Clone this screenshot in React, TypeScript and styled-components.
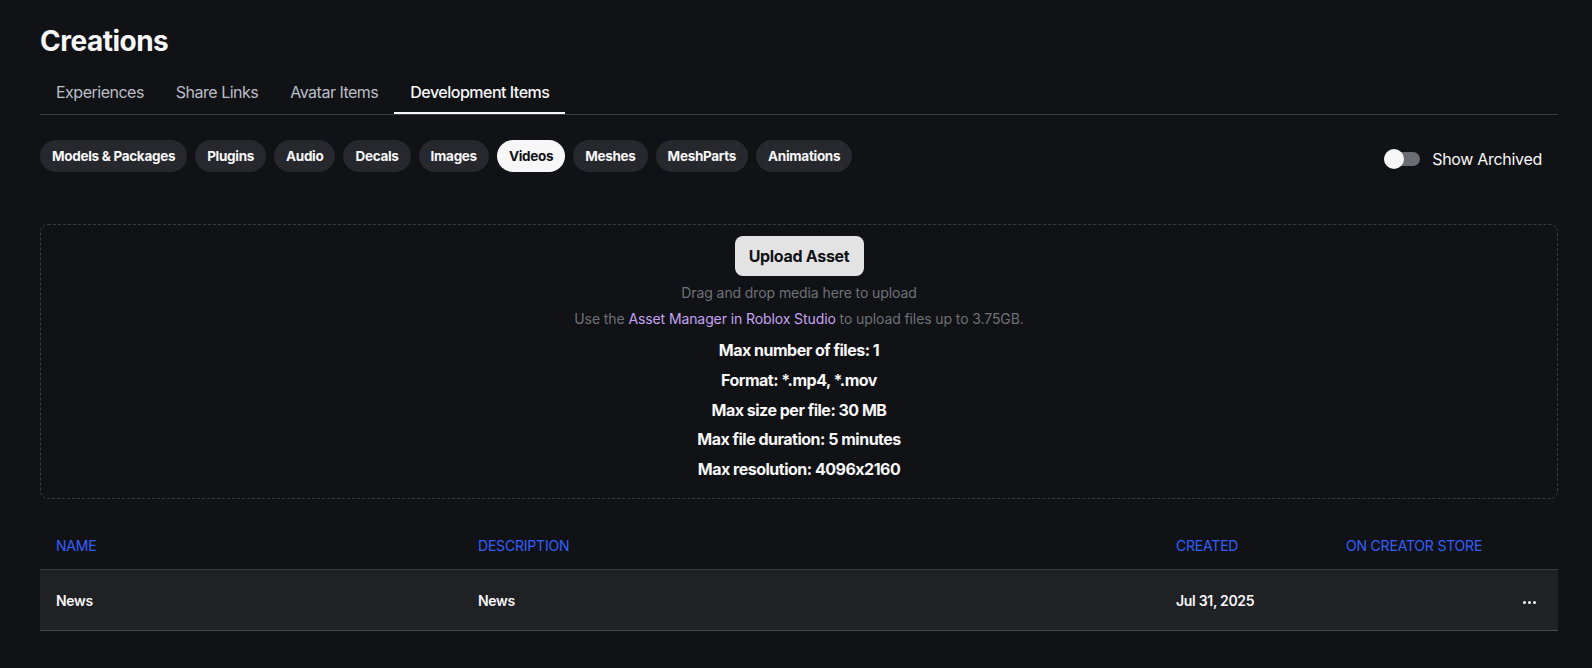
import { ReactElement } from 'react'
import styled, { createGlobalStyle } from 'styled-components'

const GlobalStyle = createGlobalStyle`
  html, body {
    margin: 0;
    background: #111216;
    font-family: Inter, 'Noto Sans', sans-serif;
    color: #f7f7f8;
    overflow: hidden;
  }
`

const Page = styled.main`
  padding: 24px 34px 0 40px;
  box-sizing: border-box;
  height: 668px;
`

const Title = styled.h1`
  font-size: 28px;
  font-weight: 700;
  margin: 0 0 14px;
  line-height: 34px;
  letter-spacing: -0.5px;
`

const TabBar = styled.nav`
  display: flex;
  border-bottom: 1px solid #3a3b40;
`

const Tab = styled.div<{ $active?: boolean }>`
  padding: 10px 16px 12px;
  font-size: 16px;
  line-height: 20px;
  color: ${(p) => (p.$active ? '#f7f7f8' : '#bcbec8')};
  font-weight: ${(p) => (p.$active ? 500 : 400)};
  box-shadow: ${(p) => (p.$active ? 'inset 0 -2px 0 #f7f7f8' : 'none')};
  letter-spacing: -0.5px;
`

const FilterRow = styled.div`
  display: flex;
  align-items: center;
  justify-content: space-between;
  margin-top: 25px;
`

const Chips = styled.div`
  display: flex;
  gap: 8px;
`

const Chip = styled.div<{ $active?: boolean }>`
  height: 32px;
  padding: 0 12px;
  display: flex;
  align-items: center;
  border-radius: 16px;
  font-size: 13.5px;
  font-weight: 700;
  letter-spacing: -0.3px;
  background: ${(p) => (p.$active ? '#f7f7f8' : '#27282d')};
  color: ${(p) => (p.$active ? '#111216' : '#f7f7f8')};
`

const ArchiveToggle = styled.label`
  display: flex;
  align-items: center;
  gap: 12px;
  font-size: 16px;
  letter-spacing: -0.3px;
  color: #f7f7f8;
  margin-top: 6px;
  margin-right: 16px;
`

const Track = styled.span`
  position: relative;
  width: 36px;
  height: 14px;
  border-radius: 7px;
  background: #6c6d72;
`

const Knob = styled.span`
  position: absolute;
  left: 0;
  top: -3px;
  width: 20px;
  height: 20px;
  border-radius: 50%;
  background: #f7f7f8;
`

const DropZone = styled.section`
  margin-top: 52px;
  border: 1px dashed #3a3b40;
  border-radius: 8px;
  height: 275px;
  box-sizing: border-box;
  display: flex;
  flex-direction: column;
  align-items: center;
  padding-top: 11px;
`

const UploadButton = styled.button`
  height: 40px;
  width: 129px;
  border: none;
  border-radius: 8px;
  background: #e3e3e4;
  color: #111216;
  font-family: inherit;
  font-size: 16px;
  font-weight: 700;
  letter-spacing: -0.3px;
`

const Hint = styled.p`
  margin: 0;
  font-size: 14px;
  line-height: 26px;
  color: #6f7178;
  letter-spacing: -0.1px;
  &:first-of-type {
    margin-top: 4px;
  }
`

const HintLink = styled.span`
  color: #c8a3f2;
`

const Specs = styled.ul`
  list-style: none;
  margin: 4px 0 0;
  padding: 0;
  text-align: center;
`

const Spec = styled.li`
  font-size: 16px;
  font-weight: 700;
  line-height: 29.8px;
  letter-spacing: -0.5px;
`

const Table = styled.div`
  margin-top: 22px;
`

const gridCols = '422px 698px 170px 1fr'

const HeadRow = styled.div`
  display: grid;
  grid-template-columns: ${gridCols};
  height: 48px;
  align-items: center;
  padding-left: 16px;
  font-size: 14px;
  color: #335fff;
  text-transform: uppercase;
  letter-spacing: -0.2px;
`

const BodyRow = styled.div`
  display: grid;
  grid-template-columns: ${gridCols};
  align-items: center;
  height: 60px;
  padding-left: 16px;
  background: #202125;
  border-top: 1px solid #3a3b40;
  border-bottom: 1px solid #4a4b50;
  font-size: 14px;
  font-weight: 600;
  letter-spacing: -0.3px;
`

const Cell = styled.div`
  position: relative;
`

const MoreButton = styled.span`
  position: absolute;
  right: 22px;
  top: 50%;
  display: flex;
  gap: 2px;
  margin-top: 1px;
`

const Dot = styled.span`
  width: 3px;
  height: 3px;
  border-radius: 50%;
  background: #f7f7f8;
`

const tabs = ['Experiences', 'Share Links', 'Avatar Items', 'Development Items']
const chips = ['Models & Packages', 'Plugins', 'Audio', 'Decals', 'Images', 'Videos', 'Meshes', 'MeshParts', 'Animations']
const specs = [
  'Max number of files: 1',
  'Format: *.mp4, *.mov',
  'Max size per file: 30 MB',
  'Max file duration: 5 minutes',
  'Max resolution: 4096x2160',
]

export default function App(): ReactElement {
  return (
    <>
      <GlobalStyle />
      <Page>
        <Title>Creations</Title>
        <TabBar>
          {tabs.map((t) => (
            <Tab key={t} $active={t === 'Development Items'}>
              {t}
            </Tab>
          ))}
        </TabBar>
        <FilterRow>
          <Chips>
            {chips.map((c) => (
              <Chip key={c} $active={c === 'Videos'}>
                {c}
              </Chip>
            ))}
          </Chips>
          <ArchiveToggle>
            <Track>
              <Knob />
            </Track>
            Show Archived
          </ArchiveToggle>
        </FilterRow>
        <DropZone>
          <UploadButton>Upload Asset</UploadButton>
          <Hint>Drag and drop media here to upload</Hint>
          <Hint>
            Use the <HintLink>Asset Manager in Roblox Studio</HintLink> to upload files up to 3.75GB.
          </Hint>
          <Specs>
            {specs.map((s) => (
              <Spec key={s}>{s}</Spec>
            ))}
          </Specs>
        </DropZone>
        <Table>
          <HeadRow>
            <div>Name</div>
            <div>Description</div>
            <div>Created</div>
            <div>On Creator Store</div>
          </HeadRow>
          <BodyRow>
            <Cell>News</Cell>
            <Cell>News</Cell>
            <Cell>Jul 31, 2025</Cell>
            <Cell>
              <MoreButton>
                <Dot />
                <Dot />
                <Dot />
              </MoreButton>
            </Cell>
          </BodyRow>
        </Table>
      </Page>
    </>
  )
}
